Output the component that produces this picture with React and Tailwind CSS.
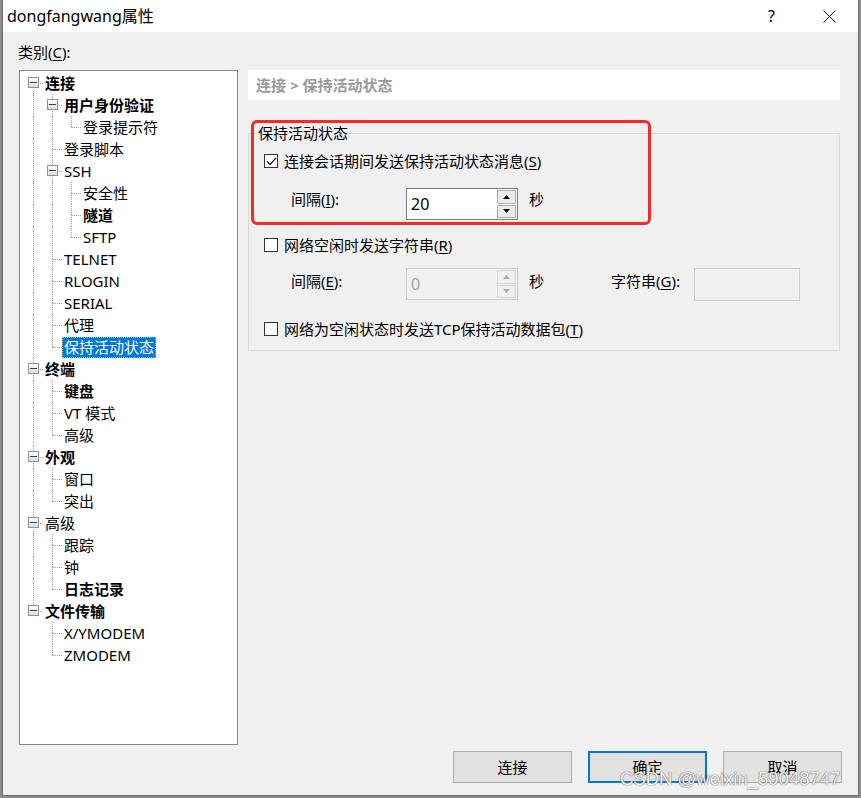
import React from 'react';

const tree = [
  {
    label: '连接',
    bold: true,
    children: [
      { label: '用户身份验证', bold: true, children: [{ label: '登录提示符' }] },
      { label: '登录脚本' },
      { label: 'SSH', children: [{ label: '安全性' }, { label: '隧道', bold: true }, { label: 'SFTP' }] },
      { label: 'TELNET' },
      { label: 'RLOGIN' },
      { label: 'SERIAL' },
      { label: '代理' },
      { label: '保持活动状态', selected: true },
    ],
  },
  { label: '终端', bold: true, children: [{ label: '键盘', bold: true }, { label: 'VT 模式' }, { label: '高级' }] },
  { label: '外观', bold: true, children: [{ label: '窗口' }, { label: '突出' }] },
  { label: '高级', children: [{ label: '跟踪' }, { label: '钟' }, { label: '日志记录', bold: true }] },
  { label: '文件传输', bold: true, children: [{ label: 'X/YMODEM' }, { label: 'ZMODEM' }] },
];

const flatten = (nodes, depth = 0, guides = [], rows = []) => {
  nodes.forEach((node, i) => {
    const isLast = i === nodes.length - 1;
    rows.push({ node, depth, guides, isLast, isFirst: depth === 0 && i === 0 });
    if (node.children) flatten(node.children, depth + 1, [...guides, !isLast], rows);
  });
  return rows;
};

const dots = 'absolute border-dotted border-[#a0a0a0]';

const TreeRow = ({ row }) => {
  const { node, guides, isLast, isFirst } = row;
  return (
    <div className="flex h-[22px] items-center">
      {guides.map((g, i) => (
        <div key={i} className="relative h-full w-[19px] shrink-0">
          {g && <span className={`${dots} left-[9px] top-0 h-full border-l`} />}
        </div>
      ))}
      <div className="relative h-full w-[19px] shrink-0">
        {!isFirst && <span className={`${dots} left-[9px] top-0 h-[11px] border-l`} />}
        {!isLast && <span className={`${dots} left-[9px] top-[11px] h-[11px] border-l`} />}
        <span className={`${dots} left-[9px] top-[11px] w-[10px] border-t`} />
        {node.children && (
          <span className="absolute left-[4px] top-[5px] flex h-[11px] w-[11px] items-center justify-center border border-[#919191] bg-gradient-to-b from-white to-[#dedede]">
            <span className="h-[1px] w-[7px] bg-[#24437a]" />
          </span>
        )}
      </div>
      <span
        className={`h-[21px] whitespace-nowrap border px-[1px] leading-[19px] ${
          node.selected
            ? 'border-dotted border-[#f3a63c] bg-[#0078d7] text-white'
            : 'border-transparent text-black'
        } ${node.bold ? 'font-bold' : ''}`}
      >
        {node.label}
      </span>
    </div>
  );
};

const CheckBox = ({ checked }) => (
  <span className="flex h-[14px] w-[14px] shrink-0 items-center justify-center border border-[#333] bg-white">
    {checked && (
      <svg width="11" height="9" viewBox="0 0 11 9" fill="none">
        <path d="M1 4.5 L4 7.5 L10 1" stroke="#222" strokeWidth="1.3" />
      </svg>
    )}
  </span>
);

const Arrow = ({ up, color }) => (
  <svg width="7" height="4" viewBox="0 0 7 4">
    <path d={up ? 'M0 4 L3.5 0 L7 4 Z' : 'M0 0 L3.5 4 L7 0 Z'} fill={color} />
  </svg>
);

const SpinBox = ({ value, disabled }) => (
  <div
    className={`flex h-[32px] w-[112px] border ${
      disabled ? 'border-[#cccccc] bg-[#f0f0f0]' : 'border-[#7a7a7a] bg-white'
    }`}
  >
    <div className={`flex flex-1 items-center pl-[4px] text-[16px] ${disabled ? 'text-[#a0a0a0]' : 'text-black'}`}>
      {value}
    </div>
    <div className="flex w-[20px] flex-col gap-[1px] py-[1px] pr-[1px]">
      <div className={`flex flex-1 items-center justify-center border ${disabled ? 'border-[#d6d6d6] bg-[#f0f0f0]' : 'border-[#acacac] bg-[#ececec]'}`}>
        <Arrow up color={disabled ? '#a8a8a8' : '#000'} />
      </div>
      <div className={`flex flex-1 items-center justify-center border ${disabled ? 'border-[#d6d6d6] bg-[#f0f0f0]' : 'border-[#acacac] bg-[#ececec]'}`}>
        <Arrow color={disabled ? '#a8a8a8' : '#000'} />
      </div>
    </div>
  </div>
);

const U = ({ children }) => <span className="underline underline-offset-2">{children}</span>;

export default function App() {
  const rows = flatten(tree);

  return (
    <div className="relative h-[798px] w-[861px] overflow-hidden bg-[#8c8c8c] pl-[2px] font-['Noto_Sans','Noto_Sans_CJK_SC',sans-serif] text-[15px] text-black">
      <div className="flex h-[796px] w-[857px] flex-col border-x border-b border-[#6f6f6f] bg-[#f0f0f0]">
        {/* title bar */}
        <div className="flex h-[32px] shrink-0 items-center bg-white pl-[4px]">
          <span className="text-[16px]">dongfangwang属性</span>
          <span className="ml-auto mr-[48px] text-[16px]">?</span>
          <svg className="mr-[22px]" width="13" height="13" viewBox="0 0 13 13">
            <path d="M0.5 0.5 L12.5 12.5 M12.5 0.5 L0.5 12.5" stroke="#111" strokeWidth="1" />
          </svg>
        </div>

        <div className="flex flex-1 flex-col px-[16px]">
          <div className="-ml-[1px] mt-[10px] h-[20px] leading-[20px]">
            类别(<U>C</U>):
          </div>

          <div className="mt-[8px] flex">
            {/* category tree */}
            <div className="h-[675px] w-[219px] shrink-0 border border-[#828790] bg-white pl-[4px] pt-[1px]">
              {rows.map((row, i) => (
                <TreeRow key={i} row={row} />
              ))}
            </div>

            {/* right panel */}
            <div className="ml-[10px] w-[592px]">
              <div className="flex h-[30px] items-center bg-white pl-[8px] font-bold text-[#9a9a9a]">
                连接 &gt; 保持活动状态
              </div>

              <fieldset className="mt-[23px] border border-[#d9d9d9] pb-[10px]">
                <legend className="ml-[8px] h-[20px] px-[1px] leading-[20px]">保持活动状态</legend>

                <div className="mt-[7px] flex h-[22px] items-center gap-[6px] pl-[15px]">
                  <CheckBox checked />
                  <span>
                    连接会话期间发送保持活动状态消息(<U>S</U>)
                  </span>
                </div>

                <div className="mt-[16px] flex items-start pl-[42px]">
                  <span className="mt-[1px] w-[115px] leading-[20px]">
                    间隔(<U>I</U>):
                  </span>
                  <SpinBox value="20" />
                  <span className="ml-[11px] mt-[1px] leading-[20px]">秒</span>
                </div>

                <div className="mt-[14px] flex h-[22px] items-center gap-[6px] pl-[15px]">
                  <CheckBox />
                  <span>
                    网络空闲时发送字符串(<U>R</U>)
                  </span>
                </div>

                <div className="mt-[12px] flex items-start pl-[42px]">
                  <span className="mt-[3px] w-[115px] leading-[20px]">
                    间隔(<U>E</U>):
                  </span>
                  <SpinBox value="0" disabled />
                  <span className="ml-[11px] mt-[3px] w-[82px] leading-[20px]">秒</span>
                  <span className="mt-[3px] w-[83px] leading-[20px]">
                    字符串(<U>G</U>):
                  </span>
                  <div className="h-[33px] w-[106px] border border-[#cccccc] bg-[#f0f0f0]" />
                </div>

                <div className="mt-[17px] flex h-[22px] items-center gap-[6px] pl-[15px]">
                  <CheckBox />
                  <span>
                    网络为空闲状态时发送TCP保持活动数据包(<U>T</U>)
                  </span>
                </div>
              </fieldset>
            </div>
          </div>

          {/* dialog buttons */}
          <div className="mt-[6px] flex justify-end gap-[16px]">
            <button className="h-[32px] w-[119px] border border-[#adadad] bg-[#e1e1e1]">连接</button>
            <button className="h-[32px] w-[119px] border-2 border-[#0078d7] bg-[#e1e1e1]">确定</button>
            <button className="h-[32px] w-[119px] border border-[#adadad] bg-[#e1e1e1]">取消</button>
          </div>
        </div>
      </div>

      {/* red annotation */}
      <div className="absolute left-[251px] top-[120px] h-[105px] w-[400px] rounded-[6px] border-[3px] border-[#f42a2a]" />

      {/* watermark */}
      <div className="absolute left-[620px] top-[765px] font-['Liberation_Sans',sans-serif] text-[18.5px] text-[#f6f6f6] [text-shadow:0_0_1px_#555,0_0_1px_#555]">
        CSDN @weixin_59048747
      </div>
    </div>
  );
}
